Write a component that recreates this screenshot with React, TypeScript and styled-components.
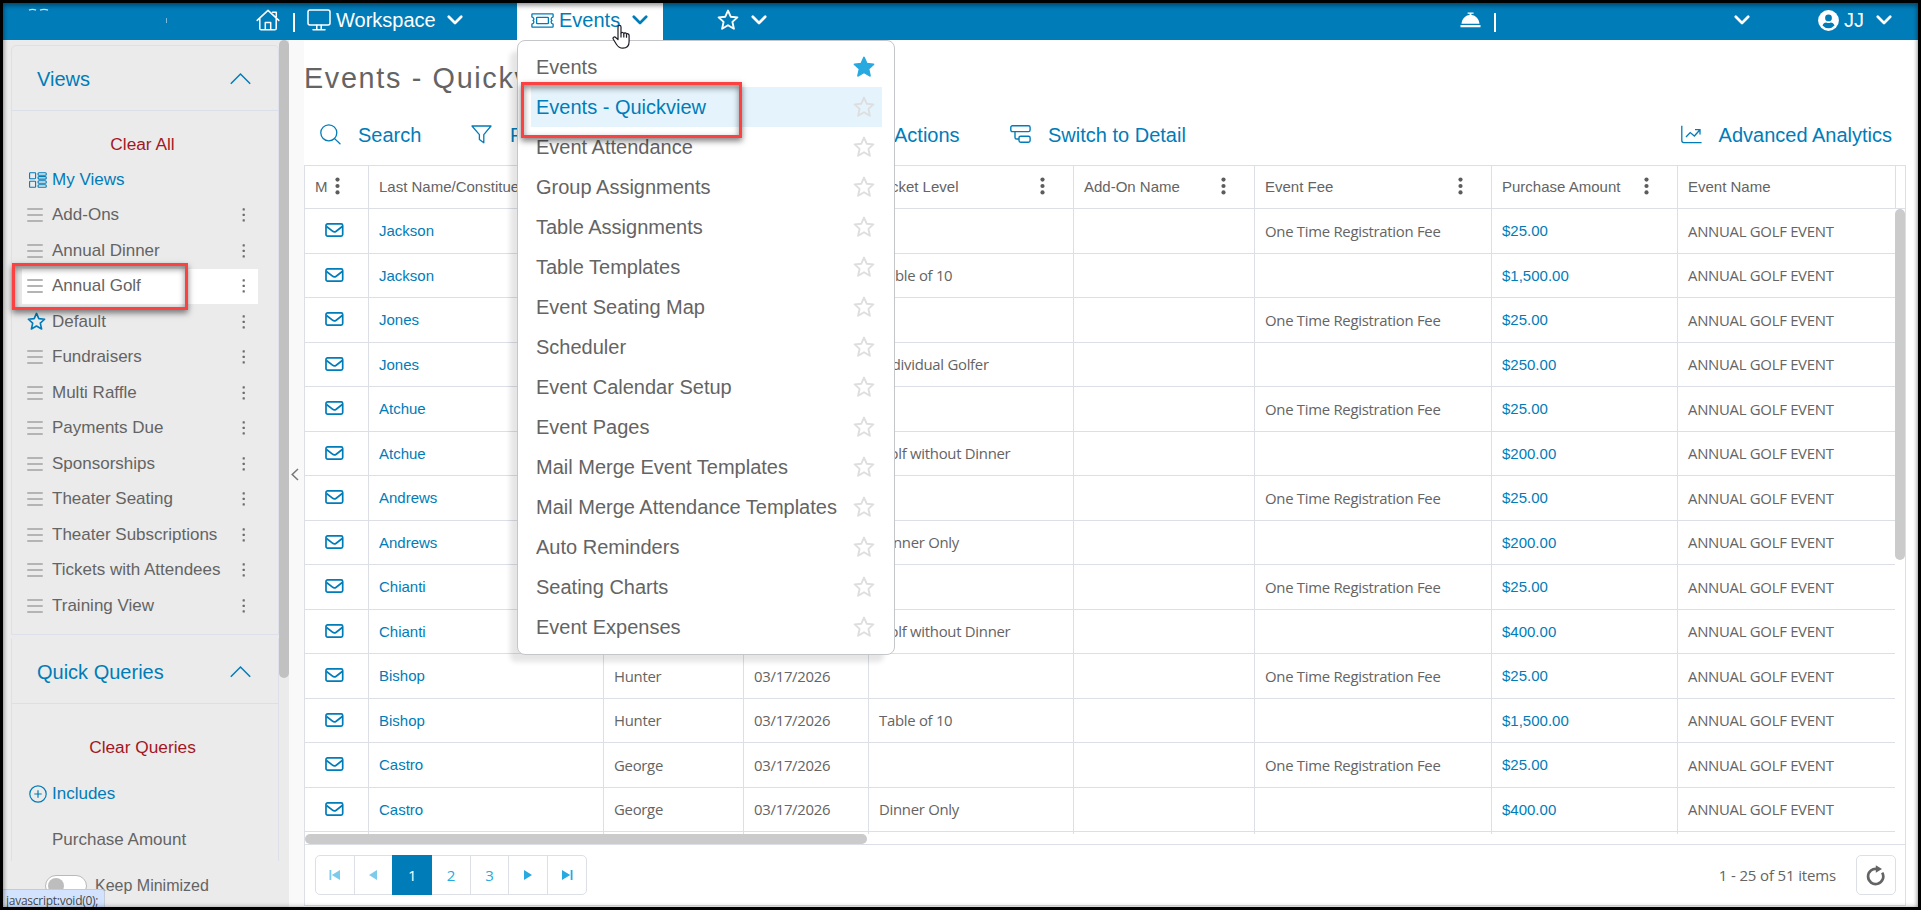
import React from "react";
import styled, { createGlobalStyle, css } from "styled-components";

const BLUE = "#007cb9";
const TEXT = "#646464";
const LINE = "#dcdfe5";
const ARIAL = `"Liberation Sans", Arial, sans-serif`;
const HUMANIST = `"Open Sans", "Noto Sans", sans-serif`;

const Global = createGlobalStyle`
  * { box-sizing: border-box; }
  body { margin: 0; background: #000; overflow: hidden; }
`;

const Frame = styled.div`
  position: relative;
  display: flex;
  flex-direction: column;
  width: 1921px;
  height: 910px;
  border: 3px solid #000;
  background: #fff;
  font-family: ${ARIAL};
  color: ${TEXT};
  overflow: hidden;
`;

const EdgeShade = styled.div`
  position: absolute;
  inset: 0;
  z-index: 20;
  pointer-events: none;
  box-shadow: inset 0 3px 5px rgba(0, 0, 0, 0.3), inset 0 0 5px rgba(0, 0, 0, 0.3);
`;

/* ---------- top bar ---------- */
const TopBar = styled.header`
  display: flex;
  align-items: center;
  flex: 0 0 37px;
  background: ${BLUE};
  color: #fff;
  font-size: 20px;
  line-height: 24px;
  white-space: nowrap;
  position: relative;
  svg { display: block; flex: none; }
`;
const NavItem = styled.div<{ $before: number; $gap?: number }>`
  display: flex;
  align-items: center;
  margin-left: ${(p) => p.$before}px;
  gap: ${(p) => p.$gap ?? 0}px;
  padding-bottom: 3px;
`;
const NavLabel = styled.span<{ $width: number }>`
  width: ${(p) => p.$width}px;
`;
const ActiveTab = styled.div`
  position: relative;
  display: flex;
  align-items: center;
  align-self: stretch;
  width: 146px;
  margin-left: 54px;
  padding: 0 0 3px 14px;
  gap: 5px;
  background: #fff;
  color: ${BLUE};
`;
const Bar = styled.span<{ $before: number }>`
  width: 2px;
  height: 19px;
  margin: 0 0 -1px ${(p) => p.$before}px;
  background: #fff;
`;
const LogoTrace = styled.svg`
  position: absolute;
  left: 22px;
  top: 5px;
`;
const Cursor = styled.svg`
  position: absolute;
  left: 609px;
  top: 21px;
  z-index: 12;
`;

/* ---------- body ---------- */
const Body = styled.div`
  display: flex;
  flex: 1;
  min-height: 0;
`;
const Sidebar = styled.aside`
  display: flex;
  width: 286px;
  background: #ebebeb;
`;
const SideScroll = styled.div`
  width: 276px;
  padding: 5px 0 0 8px;
  height: 867px;
  overflow: hidden;
`;
const SideThumb = styled.div`
  width: 10px;
  height: 638px;
  border-radius: 5px;
  background: #c1c1c1;
`;
const Collapse = styled.div`
  display: flex;
  align-items: center;
  justify-content: center;
  width: 15px;
  padding: 1px 4px 0 0;
  background: #f9f9f9;
`;
const Panel = styled.section<{ $height: number; $open?: boolean }>`
  height: ${(p) => p.$height}px;
  width: 268px;
  border: 1px solid #dde0e8;
  border-radius: ${(p) => (p.$open ? "0" : "5px 5px 0 0")};
  ${(p) => p.$open && css`border-top-color: transparent; border-bottom: 0; margin-top: 3px;`}
`;
const PanelHead = styled.div`
  display: flex;
  align-items: center;
  justify-content: space-between;
  height: 65px;
  padding: 2px 27px 0 25px;
  border-bottom: 1px solid #dbdfe9;
  color: ${BLUE};
  font-size: 20px;
  svg { margin-bottom: 2px; }
`;
const ClearLink = styled.div<{ $pad: number; $height: number }>`
  height: ${(p) => p.$height}px;
  padding: ${(p) => p.$pad}px 5px 0 0;
  text-align: center;
  font-size: 17.3px;
  line-height: 20px;
  color: #a3171f;
`;
const ViewRow = styled.div<{ $selected?: boolean; $accent?: boolean; $height?: number }>`
  display: flex;
  align-items: center;
  height: ${(p) => p.$height ?? 35.5}px;
  margin-left: 10px;
  width: 236px;
  padding: 0 12px 0 5px;
  background: ${(p) => (p.$selected ? "#fff" : "transparent")};
  color: ${(p) => (p.$accent ? BLUE : TEXT)};
  font-size: 17px;
  white-space: nowrap;
  svg { display: block; flex: none; }
`;
const RowIcon = styled.span<{ $shift?: number }>`
  display: flex;
  width: 25px;
  padding-left: ${(p) => p.$shift ?? 0}px;
`;
const RowName = styled.span`
  flex: 1;
`;
const ToggleRow = styled.div`
  display: flex;
  align-items: center;
  gap: 8px;
  margin: 14px 0 0 34px;
  font-size: 16px;
`;
const Toggle = styled.span`
  display: flex;
  align-items: center;
  width: 42px;
  height: 22px;
  padding-left: 2px;
  border: 1px solid #b9b9b9;
  border-radius: 11px;
  background: #fff;
  &::before {
    content: "";
    width: 16px;
    height: 16px;
    border-radius: 50%;
    background: #bdbdbd;
  }
`;
const StatusTip = styled.div`
  position: absolute;
  left: 0;
  bottom: 0;
  z-index: 5;
  width: 102px;
  height: 18px;
  padding-left: 3px;
  border: 1px solid #c3cbd9;
  border-width: 1px 1px 0 0;
  border-radius: 0 3px 0 0;
  background: #d3e3fd;
  color: #44474c;
  font: 12px/21px ${HUMANIST};
  letter-spacing: -0.26px;
  white-space: nowrap;
`;

/* ---------- main ---------- */
const Main = styled.main`
  display: flex;
  flex-direction: column;
  width: 1602px;
`;
const Title = styled.h1`
  margin: 0;
  height: 65px;
  padding: 20px 0 0 0;
  font-size: 28.8px;
  line-height: 36px;
  font-weight: 400;
  letter-spacing: 1.66px;
`;
const Tools = styled.div`
  display: flex;
  align-items: center;
  height: 60px;
  padding: 0 14px 0 16px;
  color: ${BLUE};
  font-size: 20px;
  white-space: nowrap;
`;
const Tool = styled.div<{ $width?: number; $gap: number; $end?: boolean }>`
  display: flex;
  align-items: center;
  gap: ${(p) => p.$gap}px;
  width: ${(p) => (p.$width ? `${p.$width}px` : "auto")};
  margin-left: ${(p) => (p.$end ? "auto" : 0)};
  svg { flex: none; margin-bottom: 2px; }
`;
const Grid = styled.div`
  display: flex;
  flex-direction: column;
  height: 741px;
  border: 1px solid ${LINE};
`;
const gridColumns = css`
  display: grid;
  grid-template-columns: 64px 235px 140px 125px 205px 181px 237px 186px 217px;
`;
const HeadRow = styled.div`
  ${gridColumns}
  grid-template-columns: 64px 235px 140px 125px 205px 181px 237px 186px 218px 1fr;
  height: 43px;
  border-bottom: 1px solid ${LINE};
  font-size: 15px;
`;
const HeadCell = styled.div`
  display: flex;
  align-items: center;
  justify-content: space-between;
  border-right: 1px solid ${LINE};
  padding: 0 28px 2px 10px;
  white-space: nowrap;
  overflow: hidden;
  &:last-child { border-right: 0; }
  svg { flex: none; }
`;
const Viewport = styled.div`
  display: flex;
  height: 625px;
`;
const Rows = styled.div`
  width: 1590px;
  overflow: hidden;
`;
const DataRow = styled.div<{ $tall: boolean }>`
  ${gridColumns}
  height: ${(p) => (p.$tall ? 45 : 44)}px;
  padding-bottom: ${(p) => (p.$tall ? 0 : 0)}px;
  border-bottom: 1px solid ${LINE};
`;
const Cell = styled.div<{ $link?: boolean }>`
  display: flex;
  align-items: center;
  padding: 0 0 1px 10px;
  border-right: 1px solid ${LINE};
  white-space: nowrap;
  &:last-child { border-right: 0; }
  ${(p) =>
    p.$link
      ? css`color: ${BLUE}; font-size: 15px;`
      : css`font-family: ${HUMANIST}; font-size: 14.9px; letter-spacing: -0.28px;`}
`;
const MailCell = styled.div`
  display: flex;
  padding: 14px 0 0 20px;
  border-right: 1px solid ${LINE};
`;
const GridThumb = styled.div`
  width: 10px;
  height: 351px;
  border-radius: 5px;
  background: #cbcbcb;
`;
const HThumb = styled.div`
  width: 562px;
  height: 10px;
  border-radius: 5px;
  background: #cbcbcb;
`;
const Pager = styled.div`
  display: flex;
  align-items: center;
  justify-content: space-between;
  flex: 1;
  border-top: 1px solid ${LINE};
  padding: 0 9px 0 10px;
  font-family: ${HUMANIST};
`;
const PageGroup = styled.div`
  display: flex;
  border: 1px solid ${LINE};
  border-radius: 5px;
`;
const PageButton = styled.div<{ $current?: boolean; $faded?: boolean }>`
  display: flex;
  align-items: center;
  justify-content: center;
  width: 38.6px;
  height: 38px;
  border-right: 1px solid ${LINE};
  color: #28a9e0;
  font-size: 15px;
  &:last-child { border-right: 0; width: 38px; }
  svg { opacity: ${(p) => (p.$faded ? 0.6 : 1)}; }
  ${(p) =>
    p.$current &&
    css`
      width: 40px;
      height: 40px;
      margin: -1px 0 -1px -1px;
      border: 0;
      background: ${BLUE};
      color: #fff;
    `}
`;
const PagerEnd = styled.div`
  display: flex;
  align-items: center;
  gap: 20px;
  font-size: 15px;
  letter-spacing: -0.15px;
`;
const RefreshButton = styled.div`
  display: flex;
  align-items: center;
  justify-content: center;
  width: 40px;
  height: 40px;
  border: 1px solid ${LINE};
  border-radius: 5px;
`;

/* ---------- menu ---------- */
const Menu = styled.nav`
  position: absolute;
  left: 514px;
  top: 37px;
  z-index: 10;
  width: 378px;
  height: 615px;
  padding: 6px 12px 0 13px;
  border: 1px solid #c4c6ca;
  border-radius: 8px;
  background: #fff;
  box-shadow: -9px 9px 5px -2px rgba(0, 0, 0, 0.1);
  font-size: 20px;
`;
const MenuItem = styled.div<{ $active?: boolean }>`
  display: flex;
  align-items: center;
  justify-content: space-between;
  height: 40px;
  padding: 0 7px 0 5px;
  background: ${(p) => (p.$active ? "#e5f4fc" : "transparent")};
  color: ${(p) => (p.$active ? BLUE : TEXT)};
  white-space: nowrap;
`;
const Callout = styled.div<{ $x: number; $y: number; $w: number; $h: number }>`
  position: absolute;
  left: ${(p) => p.$x - 3}px;
  top: ${(p) => p.$y - 3}px;
  width: ${(p) => p.$w}px;
  height: ${(p) => p.$h}px;
  z-index: 11;
  border: 3px solid #fb4141;
  box-shadow: 0 3px 6px rgba(0, 0, 0, 0.5), inset 0 3px 6px rgba(0, 0, 0, 0.45);
  pointer-events: none;
`;

/* ---------- icons ---------- */
const Star = ({ size = 22, color = "#fff", fill = "none", w = 1.9 }) => (
  <svg width={size} height={size} viewBox="0 0 22 22">
    <polygon
      points="11,1.600 13.700,7.700 20.400,8.400 15.400,12.900 16.900,19.700 11,16.300 5.100,19.700 6.600,12.900 1.600,8.400 8.300,7.700"
      fill={fill}
      stroke={color}
      strokeWidth={w}
      strokeLinejoin="round"
    />
  </svg>
);
const Chevron = () => (
  <svg width="16" height="10" viewBox="0 0 16 10" fill="none" stroke="currentColor" strokeWidth="2.7" strokeLinecap="round" strokeLinejoin="round">
    <path d="M1.800 1.800 8 8l6.200-6.200" />
  </svg>
);
const ChevronUp = () => (
  <svg width="21" height="13" viewBox="0 0 21 13" fill="none" stroke="currentColor" strokeWidth="1.500">
    <path d="M.8 11.800 10.500 2l9.700 9.800" />
  </svg>
);
const Home = () => (
  <svg width="24" height="22" viewBox="0 0 24 22" fill="none" stroke="currentColor" strokeWidth="1.500" strokeLinejoin="round" strokeLinecap="round">
    <path d="M1.200 11.400 12 1.400l10.800 10M3.800 9.500V19.500c0 .8.500 1.300 1.300 1.300h13.800c.8 0 1.300-.5 1.300-1.300V9.500M16.500 3.200h3.800v4.500M9.300 20.500v-7h5.400v7" />
  </svg>
);
const Monitor = () => (
  <svg width="24" height="22" viewBox="0 0 24 22" fill="none" stroke="currentColor" strokeWidth="1.500" strokeLinecap="round">
    <rect x="1" y="1" width="22" height="15" rx="2" />
    <path d="M9.800 16.200v4M14.200 16.200v4M6 20.700h12" />
  </svg>
);
const Ticket = () => (
  <svg width="23" height="15" viewBox="0 0 23 15" fill="none" stroke="currentColor" strokeWidth="1.300">
    <path d="M1.500.8h20c.4 0 .6.300.6.700v2.300c-1.300.5-2 1.300-2 2.200 0 .6.300 1 .8 1.500-.5.500-.8.900-.8 1.500 0 .9.700 1.700 2 2.200v2.300c0 .4-.2.700-.6.700h-20c-.4 0-.6-.3-.6-.7v-2.300c1.300-.5 2-1.300 2-2.200 0-.6-.3-1-.8-1.500.5-.5.800-.9.800-1.500 0-.9-.7-1.700-2-2.200V1.500c0-.4.200-.7.600-.7z" />
    <rect x="5.600" y="4.300" width="11.800" height="6.400" rx=".8" />
  </svg>
);
const Bell = () => (
  <svg width="21" height="16" viewBox="0 0 21 16" fill="currentColor">
    <path d="M.5 13h20v2.300H.5zM1.500 11.800C2 6.800 5.200 3.400 9.600 3V1.800H7.600V.4h6v1.400h-2.200V3c4.400.4 7.600 3.800 8.100 8.800z" />
  </svg>
);
const Avatar = () => (
  <svg width="21" height="21" viewBox="0 0 21 21">
    <circle cx="10.500" cy="10.500" r="10.400" fill="#fff" />
    <circle cx="10.500" cy="7.900" r="3.400" fill={BLUE} />
    <path d="M4.500 15.600c.7-2.100 2-3.200 3.700-3.200.8.400 1.500.5 2.300.5s1.500-.1 2.300-.5c1.700 0 3 1.100 3.700 3.200a8 8 0 0 1-12 0z" fill={BLUE} />
  </svg>
);
const Burger = () => (
  <svg width="16" height="14" viewBox="0 0 16 14" stroke="#b4b4b4" strokeWidth="2" strokeLinecap="round">
    <path d="M1 1h14M1 7h14M1 13h14" />
  </svg>
);
const SmallDots = () => (
  <svg width="4" height="14" viewBox="0 0 4 14" fill="#6c6c6c">
    <rect x=".6" y=".2" width="2.200" height="2.200" rx=".5" />
    <rect x=".6" y="5.700" width="2.200" height="2.200" rx=".5" />
    <rect x=".6" y="11.200" width="2.200" height="2.200" rx=".5" />
  </svg>
);
const Dots = () => (
  <svg width="5" height="18" viewBox="0 0 5 18" fill="#5c5c5c">
    <circle cx="2.500" cy="2.600" r="2.100" />
    <circle cx="2.500" cy="9" r="2.100" />
    <circle cx="2.500" cy="15.400" r="2.100" />
  </svg>
);
const ViewsIcon = () => (
  <svg width="18" height="16" viewBox="0 0 18 16" fill="none" stroke="currentColor" strokeWidth="1.100">
    <rect x=".6" y=".7" width="6" height="6" rx=".6" />
    <rect x=".6" y="9.300" width="6" height="6" rx=".6" />
    <rect x="9" y=".7" width="8.300" height="2.500" rx="1" />
    <rect x="9" y="4.600" width="8.300" height="2.500" rx="1" />
    <rect x="9" y="8.700" width="8.300" height="2.500" rx="1" />
    <rect x="9" y="12.800" width="8.300" height="2.500" rx="1" />
  </svg>
);
const Plus = () => (
  <svg width="18" height="18" viewBox="0 0 18 18" fill="none" stroke="currentColor" strokeWidth="1.200">
    <circle cx="9" cy="9" r="8.200" />
    <path d="M5.300 9h7.400M9 5.300v7.400" />
  </svg>
);
const Search = () => (
  <svg width="21" height="21" viewBox="0 0 21 21" fill="none" stroke="currentColor" strokeWidth="1.300" strokeLinecap="round">
    <circle cx="8.800" cy="8.800" r="8" />
    <path d="m14.600 14.600 5.400 5.200" />
  </svg>
);
const Funnel = () => (
  <svg width="21" height="19" viewBox="0 0 21 19" fill="none" stroke="currentColor" strokeWidth="1.300" strokeLinejoin="round">
    <path d="M1 1h19l-7.200 8.600V17.800L8.400 14.500V9.600z" />
  </svg>
);
const Detail = () => (
  <svg width="21" height="18" viewBox="0 0 21 18" fill="none" stroke="currentColor" strokeWidth="1.400">
    <rect x=".8" y=".8" width="19.300" height="5.800" rx="1.600" />
    <rect x="9" y="11.200" width="11.100" height="6" rx="1.600" />
    <path d="M5 6.800v5.600c0 1 .6 1.600 1.600 1.600H9" />
  </svg>
);
const Analytics = () => (
  <svg width="21" height="19" viewBox="0 0 21 19" fill="none" stroke="currentColor" strokeWidth="1.300">
    <path d="M.8.8v14.800c0 1.200.8 2 2 2h17.800M5 12l4.200-4.400 4.200 3.400 5.300-6M14 4.600h5v5" />
  </svg>
);
const Mail = () => (
  <svg width="19" height="14" viewBox="0 0 19 14" fill="none" stroke={BLUE} strokeWidth="1.700" strokeLinejoin="round">
    <rect x="1" y=".9" width="16.700" height="12.200" rx="1.600" />
    <path d="m1.500 3.500 6 4.700c1.200.9 2.500.9 3.700 0l6-4.700" />
  </svg>
);
const PageIcon = ({ d }: { d: string }) => (
  <svg width="12" height="12" viewBox="0 0 12 12" fill="currentColor"><path d={d} /></svg>
);

/* ---------- data ---------- */
const views = ["Add-Ons", "Annual Dinner", "Annual Golf", "Default", "Fundraisers", "Multi Raffle", "Payments Due", "Sponsorships", "Theater Seating", "Theater Subscriptions", "Tickets with Attendees", "Training View"];
const menu = ["Events", "Events - Quickview", "Event Attendance", "Group Assignments", "Table Assignments", "Table Templates", "Event Seating Map", "Scheduler", "Event Calendar Setup", "Event Pages", "Mail Merge Event Templates", "Mail Merge Attendance Templates", "Auto Reminders", "Seating Charts", "Event Expenses"];
const FEE = "One Time Registration Fee";
const rows: [string, string, string, string, string][] = [
  ["Jackson", "", "", FEE, "$25.00"],
  ["Jackson", "", "Table of 10", "", "$1,500.00"],
  ["Jones", "", "", FEE, "$25.00"],
  ["Jones", "", "Individual Golfer", "", "$250.00"],
  ["Atchue", "", "", FEE, "$25.00"],
  ["Atchue", "", "Golf without Dinner", "", "$200.00"],
  ["Andrews", "", "", FEE, "$25.00"],
  ["Andrews", "", "Dinner Only", "", "$200.00"],
  ["Chianti", "", "", FEE, "$25.00"],
  ["Chianti", "", "Golf without Dinner", "", "$400.00"],
  ["Bishop", "Hunter", "", FEE, "$25.00"],
  ["Bishop", "Hunter", "Table of 10", "", "$1,500.00"],
  ["Castro", "George", "", FEE, "$25.00"],
  ["Castro", "George", "Dinner Only", "", "$400.00"],
];

export default function App() {
  return (
    <Frame>
      <Global />
      <TopBar>
        <LogoTrace width="160" height="20" viewBox="0 0 160 20" fill="none" stroke="#cfe6f3">
          <path d="M4 2.200q3.500-1.600 7 0M15 2.200q4-1.600 8 0" strokeWidth="1.400" />
          <path d="M141.500 10v5" strokeWidth=".6" />
        </LogoTrace>
        <NavItem $before={253}><Home /></NavItem>
        <Bar $before={13} />
        <NavItem $before={12} $gap={5}>
          <Monitor />
          <NavLabel $width={106}>Workspace</NavLabel>
          <Chevron />
        </NavItem>
        <ActiveTab>
          <Ticket />
          <NavLabel $width={68}>Events</NavLabel>
          <Chevron />
        </ActiveTab>
        <NavItem $before={54} $gap={12}>
          <Star />
          <Chevron />
        </NavItem>
        <NavItem $before={693}><Bell /></NavItem>
        <Bar $before={13} />
        <NavItem $before={238}><Chevron /></NavItem>
        <NavItem $before={68} $gap={5}>
          <Avatar />
          <NavLabel $width={27}>JJ</NavLabel>
          <Chevron />
        </NavItem>
      </TopBar>

      <Body>
        <Sidebar>
          <SideScroll>
            <Panel $height={590}>
              <PanelHead>Views<ChevronUp /></PanelHead>
              <ClearLink $pad={23} $height={51}>Clear All</ClearLink>
              <ViewRow $accent>
                <RowIcon $shift={2}><ViewsIcon /></RowIcon>
                <RowName>My Views</RowName>
              </ViewRow>
              {views.map((v) => (
                <ViewRow key={v} $selected={v === "Annual Golf"}>
                  <RowIcon>{v === "Default" ? <Star size={19} color={BLUE} /> : <Burger />}</RowIcon>
                  <RowName>{v}</RowName>
                  <SmallDots />
                </ViewRow>
              ))}
            </Panel>
            <Panel $height={223} $open>
              <PanelHead>Quick Queries<ChevronUp /></PanelHead>
              <ClearLink $pad={33} $height={67}>Clear Queries</ClearLink>
              <ViewRow $accent $height={46}>
                <RowIcon $shift={2}><Plus /></RowIcon>
                <RowName>Includes</RowName>
              </ViewRow>
              <ViewRow $height={45}>
                <RowIcon />
                <RowName>Purchase Amount</RowName>
              </ViewRow>
            </Panel>
            <ToggleRow><Toggle />Keep Minimized</ToggleRow>
          </SideScroll>
          <SideThumb />
        </Sidebar>
        <Collapse>
          <svg width="8" height="13" viewBox="0 0 8 13" fill="none" stroke="#777" strokeWidth="1.500">
            <path d="M7 1 1.200 6.500 7 12" />
          </svg>
        </Collapse>

        <Main>
          <Title>Events - Quickview</Title>
          <Tools>
            <Tool $width={151} $gap={17}><Search />Search</Tool>
            <Tool $width={423} $gap={18}><Funnel />Filter</Tool>
            <Tool $width={116} $gap={0}>Actions</Tool>
            <Tool $gap={17}><Detail />Switch to Detail</Tool>
            <Tool $gap={17} $end><Analytics />Advanced Analytics</Tool>
          </Tools>
          <Grid>
            <HeadRow>
              <HeadCell>M<Dots /></HeadCell>
              <HeadCell>Last Name/Constituent<Dots /></HeadCell>
              <HeadCell>First Name<Dots /></HeadCell>
              <HeadCell>Date<Dots /></HeadCell>
              <HeadCell>Ticket Level<Dots /></HeadCell>
              <HeadCell>Add-On Name<Dots /></HeadCell>
              <HeadCell>Event Fee<Dots /></HeadCell>
              <HeadCell>Purchase Amount<Dots /></HeadCell>
              <HeadCell>Event Name</HeadCell>
              <HeadCell />
            </HeadRow>
            <Viewport>
              <Rows>
                {rows.map(([last, first, ticket, fee, amount], i) => (
                  <DataRow key={i} $tall={i % 2 === 0}>
                    <MailCell><Mail /></MailCell>
                    <Cell $link>{last}</Cell>
                    <Cell>{first}</Cell>
                    <Cell>03/17/2026</Cell>
                    <Cell>{ticket}</Cell>
                    <Cell />
                    <Cell>{fee}</Cell>
                    <Cell $link>{amount}</Cell>
                    <Cell>ANNUAL GOLF EVENT</Cell>
                  </DataRow>
                ))}
                <DataRow $tall>
                  <MailCell /><Cell /><Cell /><Cell /><Cell /><Cell /><Cell /><Cell /><Cell />
                </DataRow>
              </Rows>
              <GridThumb />
            </Viewport>
            <HThumb />
            <Pager>
              <PageGroup>
                <PageButton $faded><PageIcon d="M.5 1h1.800v10H.5zM11 1v10L2.800 6z" /></PageButton>
                <PageButton $faded><PageIcon d="M10 1v10L2 6z" /></PageButton>
                <PageButton $current>1</PageButton>
                <PageButton>2</PageButton>
                <PageButton>3</PageButton>
                <PageButton><PageIcon d="M2 1v10l8-5z" /></PageButton>
                <PageButton><PageIcon d="M9.700 1h1.800v10H9.700zM1 1v10l8.200-5z" /></PageButton>
              </PageGroup>
              <PagerEnd>
                1 - 25 of 51 items
                <RefreshButton>
                  <svg width="20" height="21" viewBox="0 0 20 21" fill="none">
                    <path d="M11.500 4.100A7.600 7.600 0 1 0 16.200 7.600" stroke="#646464" strokeWidth="2.700" />
                    <path d="M9.800.3v7.400L16 4z" fill="#646464" />
                  </svg>
                </RefreshButton>
              </PagerEnd>
            </Pager>
          </Grid>
        </Main>
      </Body>

      <Menu>
        {menu.map((m, i) => (
          <MenuItem key={m} $active={i === 1}>
            {m}
            {i === 0 ? <Star color="#28a9e0" fill="#28a9e0" /> : <Star color="#dedede" />}
          </MenuItem>
        ))}
      </Menu>
      <Callout $x={521} $y={82} $w={221} $h={56} />
      <Callout $x={12} $y={263} $w={176} $h={47} />
      <Cursor width="20" height="26" viewBox="0 0 20 26" fill="#fff" stroke="#1c1c24" strokeWidth="1.200" strokeLinejoin="round">
        <path d="M6 15.500V3c0-2.300 3-2.300 3 0v6.500c.3-1.500 2.600-1.300 2.800.2.500-1.200 2.500-1 2.700.6.600-1 2.600-.7 2.600 1.200v6c0 4.500-2.300 6.700-6.300 6.700-3.600 0-4.900-1.600-6.400-4L1.300 15.200c-1-1.800 1.200-3 2.400-1.700z" />
        <path d="M9 9.500v4M11.800 10v3.500M14.500 10.500v3.300" />
      </Cursor>
      <StatusTip>javascript:void(0);</StatusTip>
      <EdgeShade />
    </Frame>
  );
}
